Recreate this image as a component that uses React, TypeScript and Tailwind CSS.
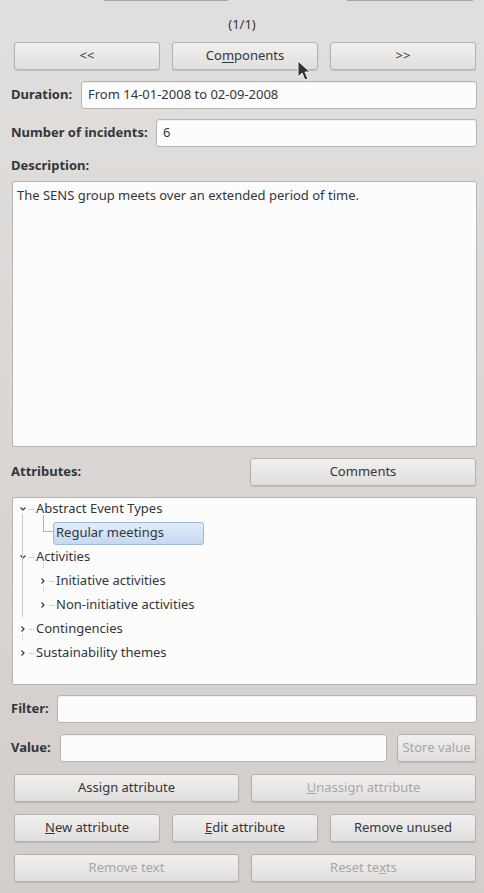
import React from "react";

const btn =
  "h-[28px] rounded-[3px] border border-[#b4b0ae] bg-gradient-to-b from-[#f1f0ef] to-[#e1dfde] shadow-[0_1px_1px_rgba(0,0,0,0.12)] text-[13px] flex items-center justify-center";
const input =
  "h-[28px] rounded-[3px] border border-[#b8b4b2] bg-[#fcfcfc] shadow-[inset_0_1px_1px_rgba(0,0,0,0.06)] text-[13px] flex items-center px-[6px]";

function Btn({ children, disabled, className }: { children: React.ReactNode; disabled?: boolean; className?: string }) {
  return (
    <div className={`${btn} ${disabled ? "text-[#a9a5a3]" : "text-[#31363b]"} ${className ?? ""}`}>{children}</div>
  );
}

function Chevron({ open }: { open: boolean }) {
  return (
    <svg width="8" height="8" viewBox="0 0 8 8" className="shrink-0">
      {open ? (
        <path d="M1.5 2.5 L4 5 L6.5 2.5" fill="none" stroke="#31363b" strokeWidth="1.2" />
      ) : (
        <path d="M2.5 1.5 L5 4 L2.5 6.5" fill="none" stroke="#31363b" strokeWidth="1.2" />
      )}
    </svg>
  );
}

function Row({ depth, open, label }: { depth: number; open?: boolean; label: string }) {
  return (
    <div className="h-[24px] flex items-center" style={{ paddingLeft: depth === 0 ? 6 : 26 }}>
      <div className="w-[8px] flex justify-center">{open !== undefined && <Chevron open={open} />}</div>
      <div className="h-[1px] w-[5px] border-t border-dotted border-[#b5b2b0] ml-[2px] mr-[2px]" />
      <span>{label}</span>
    </div>
  );
}

export default function App() {
  return (
    <div
      className="w-[484px] h-[893px] overflow-hidden relative bg-gradient-to-b from-[#e1dfdd] to-[#d3cecc] text-[#31363b] text-[13px]"
      style={{ fontFamily: '"Noto Sans", "Open Sans", sans-serif' }}
    >
      {/* fragments of buttons above */}
      <div className="relative h-[2px]">
        <div className="absolute left-[104px] w-[124px] top-0 h-[1px] bg-[#a8a5a3]" />
        <div className="absolute left-[347px] w-[126px] top-0 h-[1px] bg-[#a8a5a3]" />
      </div>

      <div className="mt-[13px] h-[18px] leading-[18px] text-center">(1/1)</div>

      <div className="mt-[9px] pl-[14px] pr-[8px] grid grid-cols-3 gap-[12px]">
        <Btn>&lt;&lt;</Btn>
        <Btn>
          Co<u className="underline-offset-2">m</u>ponents
        </Btn>
        <Btn>&gt;&gt;</Btn>
      </div>

      <div className="mt-[11px] pl-[11px] pr-[7px] flex items-center gap-[8px]">
        <span className="font-bold w-[62px]">Duration:</span>
        <div className={`${input} flex-1`}>From 14-01-2008 to 02-09-2008</div>
      </div>

      <div className="mt-[10px] pl-[11px] pr-[7px] flex items-center gap-[8px]">
        <span className="font-bold w-[137px]">Number of incidents:</span>
        <div className={`${input} flex-1`}>6</div>
      </div>

      <div className="mt-[9px] pl-[11px] h-[18px] leading-[18px] font-bold">Description:</div>

      <div className="mt-[7px] ml-[12px] mr-[7px] h-[266px] rounded-[2px] border border-[#b8b4b2] bg-[#fcfcfc] px-[4px] py-[4px] leading-[18px]">
        The SENS group meets over an extended period of time.
      </div>

      <div className="mt-[11px] pl-[11px] pr-[8px] flex items-center">
        <span className="font-bold flex-1">Attributes:</span>
        <Btn className="w-[226px]">Comments</Btn>
      </div>

      <div className="mt-[11px] ml-[12px] mr-[7px] h-[188px] relative rounded-[2px] border border-[#b8b4b2] bg-[#fcfcfc] overflow-hidden">
        {/* tree guide lines */}
        <div className="absolute left-[9px] top-[16px] h-[103px] border-l border-[#c9c6c4]" />
        <div className="absolute left-[30px] top-[17px] h-[17px] w-[10px] border-l border-b border-[#b5b2b0]" />
        <div className="absolute left-[30px] top-[65px] h-[5px] border-l border-dotted border-[#c0bdbb]" />
        <div className="absolute left-[30px] top-[89px] h-[5px] border-l border-dotted border-[#c0bdbb]" />
        <div className="absolute left-[9px] top-[137px] h-[5px] border-l border-dotted border-[#c0bdbb]" />
        <div className="mt-[-1px]">
          <Row depth={0} open label="Abstract Event Types" />
          <div className="h-[24px] flex items-center pl-[40px]">
            <div className="h-[23px] w-[151px] pl-[2px] flex items-center rounded-[3px] border border-[#9db9e2] bg-gradient-to-b from-[#e3edf9] to-[#c5d8f1]">
              Regular meetings
            </div>
          </div>
          <Row depth={0} open label="Activities" />
          <Row depth={1} open={false} label="Initiative activities" />
          <Row depth={1} open={false} label="Non-initiative activities" />
          <Row depth={0} open={false} label="Contingencies" />
          <Row depth={0} open={false} label="Sustainability themes" />
        </div>
      </div>

      <div className="mt-[10px] pl-[11px] pr-[7px] flex items-center gap-[8px]">
        <span className="font-bold w-[38px]">Filter:</span>
        <div className={`${input} flex-1`} />
      </div>

      <div className="mt-[11px] pl-[11px] pr-[8px] flex items-center">
        <span className="font-bold w-[49px]">Value:</span>
        <div className={`${input} w-[327px]`} />
        <Btn disabled className="ml-[10px] flex-1">
          Store value
        </Btn>
      </div>

      <div className="mt-[12px] pl-[14px] pr-[8px] grid grid-cols-2 gap-[12px]">
        <Btn>
          Assi<u>g</u>n attribute
        </Btn>
        <Btn disabled>
          <u>U</u>nassign attribute
        </Btn>
      </div>

      <div className="mt-[12px] pl-[14px] pr-[8px] grid grid-cols-3 gap-[12px]">
        <Btn>
          <u>N</u>ew attribute
        </Btn>
        <Btn>
          <u>E</u>dit attribute
        </Btn>
        <Btn>Remove unused</Btn>
      </div>

      <div className="mt-[12px] pl-[14px] pr-[8px] grid grid-cols-2 gap-[12px]">
        <Btn disabled>Remove text</Btn>
        <Btn disabled>
          Reset te<u>x</u>ts
        </Btn>
      </div>

      {/* mouse cursor */}
      <svg className="absolute left-[297px] top-[60px]" width="16" height="22" viewBox="0 0 16 22">
        <path d="M1 1 L1 17 L5 13 L8 20 L11 19 L8 12 L13 12 Z" fill="#2f3336" stroke="#f4f4f4" strokeWidth="1" strokeLinejoin="round" />
      </svg>
    </div>
  );
}
